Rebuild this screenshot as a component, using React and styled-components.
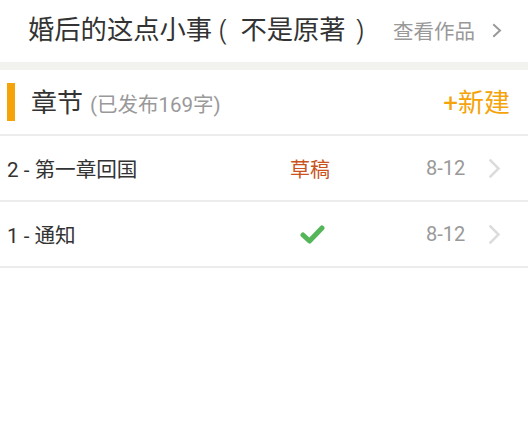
import React from "react";
import styled, { createGlobalStyle } from "styled-components";

const Global = createGlobalStyle`
  html, body { margin: 0; padding: 0; background: #fff; }
  body { font-family: Roboto, "Noto Sans CJK SC", "Noto Sans", sans-serif; }
`;

const Page = styled.div`
  width: 528px;
  background: #fff;
`;

const TopBar = styled.div`
  height: 62px;
  display: flex;
  align-items: center;
  padding: 0 26px 3px 28px;
  box-sizing: border-box;
`;

const Title = styled.div`
  flex: 1;
  font-size: 26.3px;
  line-height: 36px;
  color: #333;
  white-space: nowrap;
`;

const Paren = styled.span`
  font-family: "Noto Sans", Roboto, sans-serif;
  font-weight: 300;
  font-size: 30px;
  line-height: 1;
  vertical-align: -1px;
  margin: 0 ${(p) => p.$right}px 0 ${(p) => p.$left}px;
`;

const WorkLink = styled.div`
  display: flex;
  align-items: center;
  gap: 17px;
  font-size: 20.5px;
  color: #999;
  padding-top: 1px;
`;

const Band = styled.div`
  height: 8px;
  background: #f2f2ee;
`;

const SectionHead = styled.div`
  height: 64px;
  display: flex;
  align-items: center;
  border-bottom: 2px solid #ececec;
  padding-right: 18px;
`;

const Marker = styled.div`
  width: 8px;
  height: 38px;
  margin-left: 7px;
  margin-right: 16px;
  background: #f5a30a;
`;

const SectionTitle = styled.div`
  flex: 1;
  font-size: 26px;
  color: #333;
  display: flex;
  align-items: baseline;
  gap: 7px;
  padding-bottom: 3px;
`;

const Count = styled.span`
  font-size: 20.5px;
  color: #999;
`;

const NewBtn = styled.div`
  font-size: 26px;
  color: #f5a30a;
  padding-bottom: 3px;
`;

const Row = styled.div`
  height: 64px;
  display: grid;
  grid-template-columns: 283px 136px 62px 1fr;
  align-items: center;
  border-bottom: 2px solid #ececec;
  padding-left: 7px;
`;

const ChapterName = styled.div`
  font-size: 20.6px;
  color: #333;
`;

const Status = styled.div`
  font-size: 20px;
  color: ${(p) => p.$color || "#333"};
  display: flex;
  padding-left: ${(p) => p.$indent || 0}px;
`;

const DateText = styled.div`
  font-size: 20px;
  color: #999;
`;

const ChevronCell = styled.div`
  display: flex;
  align-items: center;
`;

const Chevron = ({ color, w, h, sw }) => (
  <svg width={w} height={h} viewBox={`0 0 ${w} ${h}`} fill="none">
    <polyline
      points={`${sw},${sw} ${w - sw},${h / 2} ${sw},${h - sw}`}
      stroke={color}
      strokeWidth={sw}
      strokeLinecap="square"
      strokeLinejoin="miter"
    />
  </svg>
);

const Check = () => (
  <svg width="25" height="19" viewBox="0 0 25 19">
    <polyline
      points="3,10 9.5,16 22,3"
      fill="none"
      stroke="#55b559"
      strokeWidth="5"
      strokeLinecap="round"
      strokeLinejoin="round"
    />
  </svg>
);

const chapters = [
  { id: 2, name: "第一章回国", status: "draft", date: "8-12" },
  { id: 1, name: "通知", status: "done", date: "8-12" },
];

export default function App() {
  return (
    <Page>
      <Global />
      <TopBar>
        <Title>
          婚后的这点小事<Paren $left={7} $right={13}>(</Paren>不是原著
          <Paren $left={10} $right={0}>)</Paren>
        </Title>
        <WorkLink>
          查看作品
          <Chevron color="#999" w={10} h={15} sw={2} />
        </WorkLink>
      </TopBar>
      <Band />
      <SectionHead>
        <Marker />
        <SectionTitle>
          章节<Count>(已发布169字)</Count>
        </SectionTitle>
        <NewBtn>+新建</NewBtn>
      </SectionHead>
      {chapters.map((c) => (
        <Row key={c.id}>
          <ChapterName>
            {c.id} - {c.name}
          </ChapterName>
          {c.status === "draft" ? (
            <Status $color="#c9521d">草稿</Status>
          ) : (
            <Status $indent={10}>
              <Check />
            </Status>
          )}
          <DateText>{c.date}</DateText>
          <ChevronCell>
            <Chevron color="#dcdcdc" w={13} h={21} sw={2.5} />
          </ChevronCell>
        </Row>
      ))}
    </Page>
  );
}
